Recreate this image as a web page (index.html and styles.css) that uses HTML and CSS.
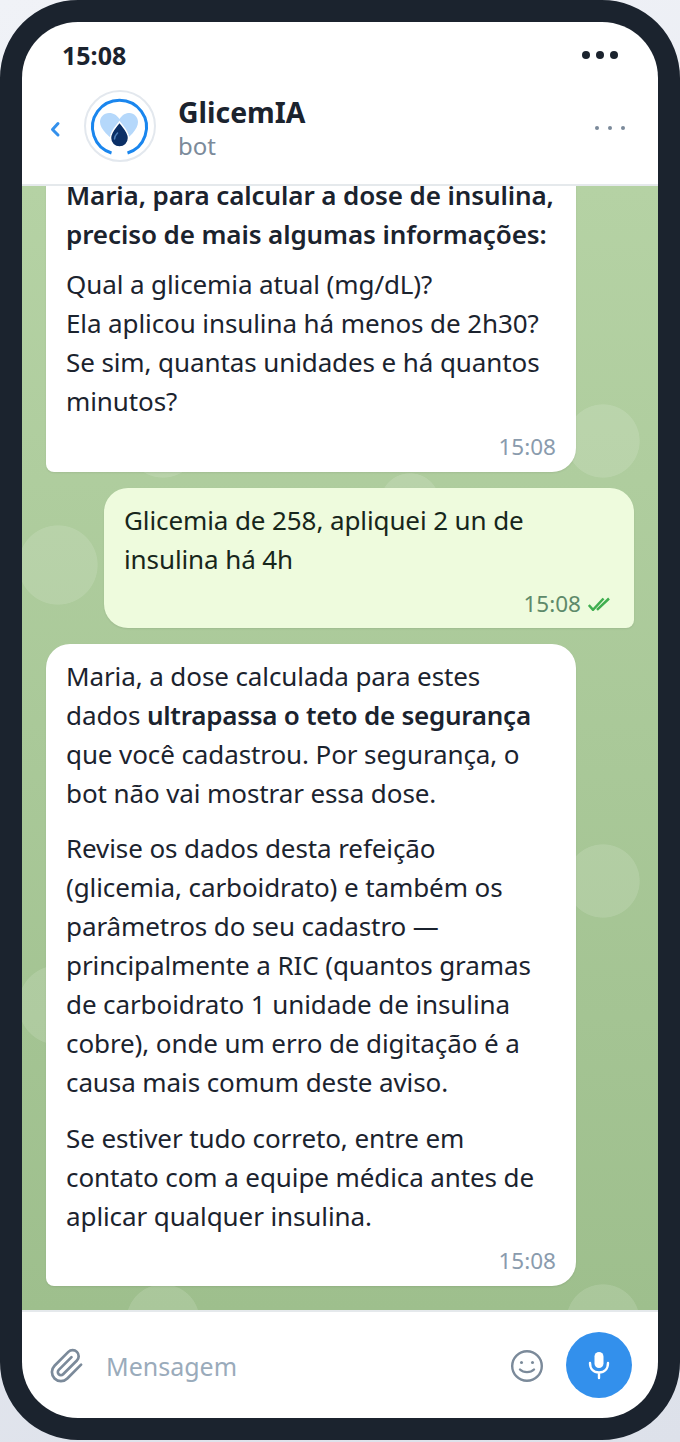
FILE: index.html
```html
<!DOCTYPE html>
<html lang="pt-BR">
<head>
  <meta charset="UTF-8" />
  <meta name="viewport" content="width=device-width, initial-scale=1" />
  <title>GlicemIA</title>
  <link rel="stylesheet" href="styles.css">
</head>
<body>
  <div class="phone">
    <div class="screen">
      <div class="status">
        <span class="clock">15:08</span>
        <span class="status-dots"><i></i><i></i><i></i></span>
      </div>

      <div class="header">
        <svg class="back" width="12" height="18" viewBox="0 0 12 18"><path d="M9 3.500 3.500 9.500 9 15" fill="none" stroke="#3390ec" stroke-width="3" stroke-linecap="round" stroke-linejoin="round"/></svg>
        <div class="avatar">
          <svg width="68" height="68" viewBox="0 0 68 68">
            <path d="M25.500 61A27 27 0 1 1 41.500 61" fill="none" stroke="#1a86ee" stroke-width="3"/>
            <path d="M33.500 27C30.500 22.500 26.500 21 23 21 18 21 14 25 14 30 14 37 23 45 33.500 53 44 45 52 37 52 30 52 25 48 21 43.500 21 40 21 36.500 22.500 33.500 27Z" fill="#b5d8fb"/>
            <path d="M33.500 30C29.500 35.500 24.500 40 24.500 46 24.500 51.500 28.500 55 33.500 55 38.500 55 42.500 51.500 42.500 46 42.500 40 37.500 35.500 33.500 30Z" fill="#0b2f66" stroke="#fff" stroke-width="1.500"/>
            <path d="M28.500 47C28.500 44.500 30 42.500 31.500 41" fill="none" stroke="#4f7fb8" stroke-width="1.500" stroke-linecap="round"/>
          </svg>
        </div>
        <div class="title">
          <div class="name">GlicemIA</div>
          <div class="sub">bot</div>
        </div>
        <span class="menu"><i></i><i></i><i></i></span>
      </div>

      <div class="chat">
        <div class="msg in">
          <p class="head"><b>Maria, para calcular a dose de insulina,<br>preciso de mais algumas informações:</b></p>
          <p>Qual a glicemia atual (mg/dL)?<br>Ela aplicou insulina há menos de 2h30?<br>Se sim, quantas unidades e há quantos<br>minutos?</p>
          <div class="meta">15:08</div>
        </div>

        <div class="msg out">
          <p>Glicemia de 258, apliquei 2 un de<br>insulina há 4h</p>
          <div class="meta">15:08
            <svg width="22" height="14" viewBox="0 0 22 14"><path d="M.8 8 5 12.800 15.500 1.500M9 12.800 21 1.500" fill="none" stroke="#3fae4f" stroke-width="2.500"/></svg>
          </div>
        </div>

        <div class="msg in">
          <p>Maria, a dose calculada para estes<br>dados <b>ultrapassa o teto de segurança</b><br>que você cadastrou. Por segurança, o<br>bot não vai mostrar essa dose.</p>
          <p>Revise os dados desta refeição<br>(glicemia, carboidrato) e também os<br>parâmetros do seu cadastro —<br>principalmente a RIC (quantos gramas<br>de carboidrato 1 unidade de insulina<br>cobre), onde um erro de digitação é a<br>causa mais comum deste aviso.</p>
          <p>Se estiver tudo correto, entre em<br>contato com a equipe médica antes de<br>aplicar qualquer insulina.</p>
          <div class="meta">15:08</div>
        </div>
      </div>

      <div class="composer">
        <svg class="clip" width="36" height="36" viewBox="0 0 24 24"><path d="M21.400 11.100l-9.200 9.200a6 6 0 0 1-8.500-8.500l9.200-9.200a4 4 0 0 1 5.700 5.700l-9.200 9.200a2 2 0 0 1-2.900-2.900l8.500-8.500" fill="none" stroke="#7b8a9a" stroke-width="1.800" stroke-linecap="round" stroke-linejoin="round"/></svg>
        <div class="placeholder">Mensagem</div>
        <svg class="smile" width="34" height="34" viewBox="0 0 34 34">
          <circle cx="17" cy="17" r="14.800" fill="none" stroke="#7b8a9a" stroke-width="2.400"/>
          <circle cx="11.500" cy="13.500" r="1.500" fill="#7b8a9a"/>
          <circle cx="22.500" cy="13.500" r="1.500" fill="#7b8a9a"/>
          <path d="M10 20.500c3.500 3.500 10.500 3.500 14 0" fill="none" stroke="#7b8a9a" stroke-width="2.400" stroke-linecap="round"/>
        </svg>
        <div class="mic">
          <svg width="30" height="32" viewBox="0 0 30 32">
            <rect x="10.500" y="3" width="9" height="16" rx="4.500" fill="#fff"/>
            <path d="M6 14c0 6 3.500 9.500 9 9.500s9-3.500 9-9.500M15 23.500V29" fill="none" stroke="#fff" stroke-width="2.400" stroke-linecap="round"/>
          </svg>
        </div>
      </div>
    </div>
  </div>
</body>
</html>
```

FILE: styles.css
```css
* {
  box-sizing: border-box;
}
html, body {
  margin: 0;
  padding: 0;
}
body {
  width: 680px;
  height: 1442px;
  overflow: hidden;
  background: linear-gradient(160deg, #f0f2f7, #dde1ea);
  font-family: 'Noto Sans', 'Open Sans', sans-serif;
  color: #1b232e;
}
.phone {
  width: 680px;
  height: 1440px;
  border: 22px solid #1b232e;
  border-radius: 78px;
  background: #1b232e;
}
.screen {
  height: 100%;
  border-radius: 56px;
  overflow: hidden;
  background: #fff;
  display: flex;
  flex-direction: column;
}

.status {
  height: 56px;
  flex-shrink: 0;
  padding: 10px 40px 0 40px;
  display: flex;
  justify-content: space-between;
  align-items: center;
}
.clock {
  font-size: 25px;
  font-weight: 700;
}
.status-dots, .menu {
  display: flex;
}
.status-dots {
  gap: 6px;
}
.status-dots i {
  width: 8px;
  height: 8px;
  border-radius: 50%;
  background: #1b232e;
}

.header {
  height: 108px;
  flex-shrink: 0;
  border-bottom: 2px solid #e5e9ec;
  padding: 0 33px 10px 27px;
  display: flex;
  align-items: center;
}
.back {
  margin-right: 23px;
  margin-top: 6px;
}
.avatar {
  width: 72px;
  height: 72px;
  border: 2px solid #e3e8ee;
  border-radius: 50%;
  flex-shrink: 0;
}
.title {
  margin-left: 22px;
  margin-top: 3px;
  flex: 1;
}
.name {
  font-size: 28.400px;
  font-weight: 700;
  line-height: 36px;
}
.sub {
  font-size: 24px;
  line-height: 32px;
  color: #7b8a9a;
}
.menu {
  gap: 9px;
  margin-top: 4px;
}
.menu i {
  width: 4px;
  height: 4px;
  border-radius: 50%;
  background: #7b8a9a;
}

.chat {
  flex: 1;
  min-height: 0;
  overflow: hidden;
  padding: 0 24px 24px;
  display: flex;
  flex-direction: column;
  justify-content: flex-end;
  gap: 16px;
  background:
    radial-gradient(circle 37px at 220px 220px, rgba(255, 255, 255, .12) 98%, transparent) 361px 35px / 440px 440px,
    radial-gradient(circle 40px at 220px 220px, rgba(255, 255, 255, .12) 98%, transparent) -184px 159px / 440px 440px,
    radial-gradient(circle 30px at 220px 220px, rgba(255, 255, 255, .12) 98%, transparent) 168px 97px / 440px 440px,
    linear-gradient(180deg, #b5d2a4, #9ebf8d);
}
.msg {
  width: 530px;
  flex-shrink: 0;
  padding: 12.500px 20px 10px;
  font-size: 26px;
  line-height: 39px;
  letter-spacing: -.1px;
  white-space: nowrap;
  box-shadow: 0 1px 2px rgba(0, 0, 0, .08);
}
.msg p {
  margin: 0 0 16.500px;
}
.msg p.head {
  margin-bottom: 11px;
}
.msg p:last-of-type {
  margin-bottom: 10.500px;
}
.msg p.head + p {
  margin-bottom: 11.500px;
}
.msg b {
  font-weight: 600;
  letter-spacing: -.25px;
}
.msg .head b {
  letter-spacing: -.1px;
}
.in {
  background: #fff;
  border-radius: 24px 24px 24px 8px;
}
.out {
  align-self: flex-end;
  background: #eefbdd;
  color: #17261b;
  border-radius: 24px 24px 8px 24px;
}
.meta {
  font-size: 22.500px;
  line-height: 30px;
  letter-spacing: 0;
  color: #8a9bad;
  display: flex;
  justify-content: flex-end;
  align-items: center;
  gap: 7px;
}
.out .meta {
  color: #5e8a6a;
  line-height: 29px;
  padding-right: 4px;
}

.composer {
  height: 108px;
  flex-shrink: 0;
  border-top: 2px solid #e5e9ec;
  padding: 2px 26px 0 27px;
  display: flex;
  align-items: center;
}
.placeholder {
  flex: 1;
  margin-left: 21px;
  font-size: 25px;
  color: #9aabbb;
}
.mic {
  width: 66px;
  height: 66px;
  margin-left: 22px;
  margin-top: -2px;
  border-radius: 50%;
  background: #3390ec;
  display: flex;
  align-items: center;
  justify-content: center;
}
```
